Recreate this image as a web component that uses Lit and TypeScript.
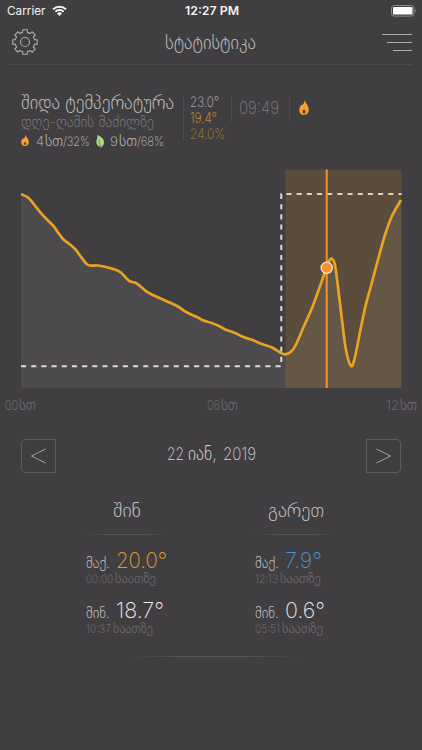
import { LitElement, html, svg, css } from "lit";
import { customElement, property } from "lit/decorators.js";

type Pt = [number, number];

/** One line of text set to an exact measure. */
@customElement("fit-label")
class FitLabel extends LitElement {
  @property() text = "";
  @property({ type: Number }) width = 40;
  @property({ type: Number }) height = 16;
  @property({ type: Number }) size = 12;

  static styles = css`
    :host { display: block; flex: none; }
    .line { display: block; overflow: visible; }
    .glyphs { fill: currentColor; }
  `;

  render() {
    return html`<svg class="line" width=${this.width} height=${this.height}>
      <text class="glyphs" x="0" y=${this.height} font-size=${this.size}
        textLength=${this.width} lengthAdjust="spacingAndGlyphs">${this.text}</text>
    </svg>`;
  }
}

const label = (text: string, width: number, height: number, size: number, cls = "") =>
  html`<fit-label class=${cls} .text=${text} .width=${width} .height=${height} .size=${size}></fit-label>`;

const flame = (w: number, h: number) => html`<svg class="icon" width=${w} height=${h} viewBox="0 0 10 15" preserveAspectRatio="none">
  <path fill="#f7a02b" fill-rule="evenodd" d="M5.600 0C6.300 3 9.800 5.600 9.800 9.800C9.800 13 7.700 15 5 15S.2 13 .2 9.900C.2 7.300 1.700 5.900 2.200 4.700C3 5 3.400 5 3.700 4.600C4.900 3.500 5.500 2 5.600 0ZM5 9C4.600 10 3.600 10.600 3.600 12C3.600 13 4.200 13.500 5 13.500S6.400 13 6.400 12C6.400 10.600 5.400 10 5 9Z"/>
</svg>`;

const leaf = html`<svg class="icon" width="9" height="13" viewBox="0 0 9 13">
  <path fill="#a5dd7c" d="M1.400 0C4.800 1.500 8 3.600 8 7.400C8 9.800 6.800 11.100 5.500 11.600L6 13H5.200L4.600 11.700C1.500 11.400 .3 9.300 .4 6.700C.4 4.300 1.900 2.700 1.400 0Z"/>
  <path fill="none" stroke="#5d7050" stroke-width=".6" d="M3 4.500C3.300 7.500 4.200 10 5.200 12.400"/>
</svg>`;

/** Gear outline with eight teeth. */
function gearPath(): string {
  const out: string[] = [];
  for (let i = 0; i < 8; i++) {
    const a = (i * Math.PI) / 4;
    const at = (r: number, d: number) =>
      `${(13 + r * Math.sin(a + d)).toFixed(2)} ${(13 - r * Math.cos(a + d)).toFixed(2)}`;
    out.push(`${i ? "L" : "M"}${at(9.9, -0.24)}L${at(12.4, -0.18)}L${at(12.4, 0.18)}L${at(9.9, 0.24)}`);
    out.push(`A9.9 9.9 0 0 1 ${at(9.9, Math.PI / 4 - 0.24)}`);
  }
  return out.join("") + "Z";
}

/** Smooth curve through the samples. */
function smooth(p: Pt[]): string {
  let d = `M${p[0]}`;
  for (let i = 0; i < p.length - 1; i++) {
    const a = p[Math.max(i - 1, 0)], b = p[i], c = p[i + 1], e = p[Math.min(i + 2, p.length - 1)];
    d += `C${b[0] + (c[0] - a[0]) / 6} ${b[1] + (c[1] - a[1]) / 6} ${c[0] - (e[0] - b[0]) / 6} ${c[1] - (e[1] - b[1]) / 6} ${c[0]} ${c[1]}`;
  }
  return d;
}

const samples: Pt[] = [
  [21, 194], [28, 197.5], [33, 203], [40, 212], [45, 217.5], [53, 225.5], [57, 231], [63, 239],
  [70, 244.5], [76, 250], [81, 257], [87, 264.3], [91, 265.6], [97, 265.5], [105, 266.7], [115, 269.5],
  [121.5, 273], [129, 280.8], [136, 283], [143.5, 289], [147, 291.8], [155, 296], [166, 301], [177, 306],
  [187, 312.5], [197, 317], [203, 320.3], [211, 322.8], [219, 326], [226, 329.7], [235, 333], [244, 337.3],
  [252, 339.8], [262, 344], [272, 347.5], [279, 351.8], [285, 354.3], [291, 351.8], [296, 344.5],
  [304, 326], [312, 308], [319, 289], [325, 272], [328.5, 262], [332, 258.7], [335, 265], [338, 287],
  [342, 320], [346, 350], [351, 366], [355, 357], [361, 327], [366, 304], [371, 286], [379, 256],
  [385, 235], [392, 216], [401, 200],
];

@customElement("temperature-chart")
class TemperatureChart extends LitElement {
  static styles = css`
    :host { display: block; }
    .plot { display: block; }
  `;
  render() {
    const line = smooth(samples);
    return html`<svg class="plot" width="381" height="219" viewBox="21 169 381 219">
      ${svg`
      <path d="${line}V388H21Z" fill="#4c4a4d"/>
      <path d="M21 366.300H281.300V194H401.500" fill="none" stroke="#dedad8" stroke-width="2" stroke-dasharray="5.090 5.090"/>
      <rect x="285.500" y="169.500" width="116" height="218.500" fill="#ee9e1e" fill-opacity=".16"/>
      <path d=${line} fill="none" stroke="#e8a321" stroke-width="2.700" stroke-linejoin="round"/>
      <path d="M326.700 169.500V388" stroke="#f39330" stroke-width="2"/>
      <circle cx="326.700" cy="267.800" r="5.600" fill="#f7922a" stroke="#fbe6cf" stroke-width="1.300"/>`}
    </svg>`;
  }
}

const columns = [
  { title: "შინ", w: 28, rows: [
    { k: "მაქ.", v: "20.0°", vw: 51, tone: "amber", t: "00:00", tw: 27, s: 41 },
    { k: "მინ.", v: "18.7°", vw: 48, tone: "white", t: "10:37", tw: 25, s: 40 } ] },
  { title: "გარეთ", w: 56, rows: [
    { k: "მაქ.", v: "7.9°", vw: 37, tone: "blue", t: "12:13", tw: 23, s: 41 },
    { k: "მინ.", v: "0.6°", vw: 40, tone: "white", t: "05:51", tw: 25, s: 41 } ] },
];

@customElement("app-root")
class AppRoot extends LitElement {
  static styles = css`
    :host {
      display: flex; flex-direction: column; box-sizing: border-box;
      width: 422px; height: 750px; overflow: hidden; background: #403e41; color: #c4c2c4;
      font-family: Inter, "DejaVu Sans", sans-serif; font-weight: 200;
    }
    .icon { display: block; flex: none; }
    .status { display: grid; grid-template-columns: 1fr auto 1fr; align-items: start; height: 20px; padding: 0 5px 0 7px; color: #f4f4f4; }
    .carrier { display: flex; gap: 6px; padding-top: 5px; font-weight: 400; }
    .clock { padding-top: 6px; font-weight: 600; }
    .battery { justify-self: end; padding-top: 5px; }
    .header { display: flex; justify-content: space-between; height: 44px; margin: 0 10px; padding: 0 0 0 2px; border-bottom: 1px solid #4c4a4d; }
    .gear { padding-top: 9px; }
    .title { padding: 14px 0 0 1px; }
    .menu { padding-top: 13px; }
    .summary { display: flex; align-items: flex-start; height: 104px; padding-left: 21px; box-sizing: border-box; padding-top: 31px; }
    .about { width: 162px; display: grid; row-gap: 7px; }
    .dim { color: #7e7c7f; }
    .ratio { display: flex; align-items: flex-end; height: 12px; }
    .ratio .unit { margin-left: 1px; }
    .gap { margin-left: 7px; }
    .leafbox { margin: 0 5px -2px 6px; }
    .tall, .short { width: 1px; background: #4e4c4f; }
    .tall { height: 45px; }
    .short { height: 26px; }
    .readings { display: grid; row-gap: 5px; width: 41px; padding-left: 6px; }
    .amber { color: #e0a026; }
    .dark-amber { color: #ac8234; }
    .time { width: 50px; padding: 5px 0 0 7px; color: #807e81; }
    .burner { padding: 4px 0 0 9px; }
    .chart { margin-left: 21px; }
    .axis { display: grid; grid-template-columns: 202px 179px auto; padding: 12px 0 0 5px; color: #7a787b; }
    .tick { display: flex; gap: 1px; align-items: flex-end; }
    .pager { display: flex; justify-content: space-between; margin: 29px 21px 0; height: 35px; }
    .button { width: 35px; height: 34px; box-sizing: border-box; border: 1px solid #5d5b5e; display: grid; place-items: center; }
    .prev { border-radius: 4px 0 0 4px; }
    .next { border-radius: 0 4px 4px 0; }
    .date { display: flex; padding-top: 8px; color: #d6d4d6; }
    .date .month { margin: 0 6px 0 4px; }
    .columns { display: grid; grid-template-columns: 81px 81px; column-gap: 88px; padding: 29px 0 0 86px; }
    .column { display: flex; flex-direction: column; }
    .heading { display: grid; justify-items: center; height: 31px; box-sizing: border-box; }
    .rule { height: 1px; background: linear-gradient(90deg, transparent, #565457 30%, #565457 70%, transparent); }
    .entry { height: 50px; }
    .first { margin-top: 17px; }
    .value { display: flex; align-items: flex-end; gap: 6px; }
    .when { display: flex; gap: 2px; padding-top: 6px; color: #7a787b; }
    .white { color: #eceaec; }
    .blue { color: #4f90d6; }
    .foot { width: 170px; margin: 4px 0 0 128px; }
  `;

  render() {
    return html`
      <div class="status">
        <div class="carrier">
          ${label("Carrier", 38.5, 10, 11.7)}
          <svg class="icon" width="15" height="11" viewBox="0 0 15 11" fill="none" stroke="#f4f4f4" stroke-width="2">
            <path d="M1 4.400A9.200 9.200 0 0 1 14 4.400M3.400 6.800A5.800 5.800 0 0 1 11.600 6.800"/>
            <path fill="#f4f4f4" stroke="none" d="M5 8.500A3.500 3.500 0 0 1 10 8.500L7.500 11Z"/>
          </svg>
        </div>
        ${label("12:27 PM", 54, 9.3, 12, "clock")}
        <div class="battery"><svg class="icon" width="26" height="12" viewBox="0 0 26 12">
          <rect x=".5" y=".5" width="22.500" height="10.600" rx="2.600" fill="none" stroke="#8e8c8f"/>
          <rect x="2" y="2" width="19.500" height="7.600" rx="1.200" fill="#fff"/>
          <path d="M24.300 3.800Q26 5.800 24.300 7.800Z" fill="#8e8c8f"/></svg></div>
      </div>
      <div class="header">
        <div class="gear"><svg class="icon" width="26" height="26" fill="none" stroke="#aeacaf" stroke-width="1.100">
          <path d=${gearPath()}/><circle cx="13" cy="13" r="4.500"/></svg></div>
        <div class="title">${label("სტატისტიკა", 91, 15, 19)}</div>
        <div class="menu"><svg class="icon" width="30" height="20" stroke="#aeacaf" stroke-width="1">
          <path d="M0 1.500H30M5 9.500H30M11 17.500H30"/></svg></div>
      </div>
      <div class="summary">
        <div class="about">
          ${label("შიდა ტემპერატურა", 153, 13, 18.5)}
          ${label("დღე-ღამის მაძილზე", 133, 11, 15, "dim")}
          <div class="ratio">${flame(8, 11)}<span class="gap"></span>
            ${label("4", 8, 10, 13)}${label("სთ", 18, 10, 14.5, "unit")}${label("/32%", 27, 10, 13)}
            <span class="leafbox">${leaf}</span>
            ${label("9", 8, 10, 13)}${label("სთ", 18, 10, 14.5, "unit")}${label("/68%", 27, 10, 13)}
          </div>
        </div>
        <div class="tall"></div>
        <div class="readings">
          ${label("23.0°", 29, 11, 14)}${label("19.4°", 27, 11, 14, "amber")}${label("24.0%", 35, 11, 14, "dark-amber")}
        </div>
        <div class="short"></div>
        <div class="time">${label("09:49", 40, 13, 17.5)}</div>
        <div class="short"></div>
        <div class="burner">${flame(10, 15)}</div>
      </div>
      <temperature-chart class="chart"></temperature-chart>
      <div class="axis">
        ${["00", "06", "12"].map((n) => html`<div class="tick">${label(n, 13, 10, 13.5)}${label("სთ", 17, 10, 14.5)}</div>`)}
      </div>
      <div class="pager">
        <div class="button prev"><svg class="icon" width="17" height="16" fill="none" stroke="#a09ea1"><path d="M15.500 1L1.500 8L15.500 15"/></svg></div>
        <div class="date">${label("22", 17, 13, 17)}${label("იან,", 29, 13, 19, "month")}${label("2019", 33, 13, 17)}</div>
        <div class="button next"><svg class="icon" width="17" height="16" fill="none" stroke="#a09ea1"><path d="M1.500 1L15.500 8L1.500 15"/></svg></div>
      </div>
      <div class="columns">
        ${columns.map((c) => html`<div class="column">
          <div class="heading">${label(c.title, c.w, 14, 20)}</div>
          <div class="rule"></div>
          ${c.rows.map((r, i) => html`<div class="entry ${i ? "" : "first"}">
            <div class="value">${label(r.k, 24, 15, 15.5)}${label(r.v, r.vw, 16, 22, r.tone)}</div>
            <div class="when">${label(r.t, r.tw, 9, 11.5)}${label("საათზე", r.s, 9, 12.5)}</div>
          </div>`)}
        </div>`)}
      </div>
      <div class="rule foot"></div>
    `;
  }
}
